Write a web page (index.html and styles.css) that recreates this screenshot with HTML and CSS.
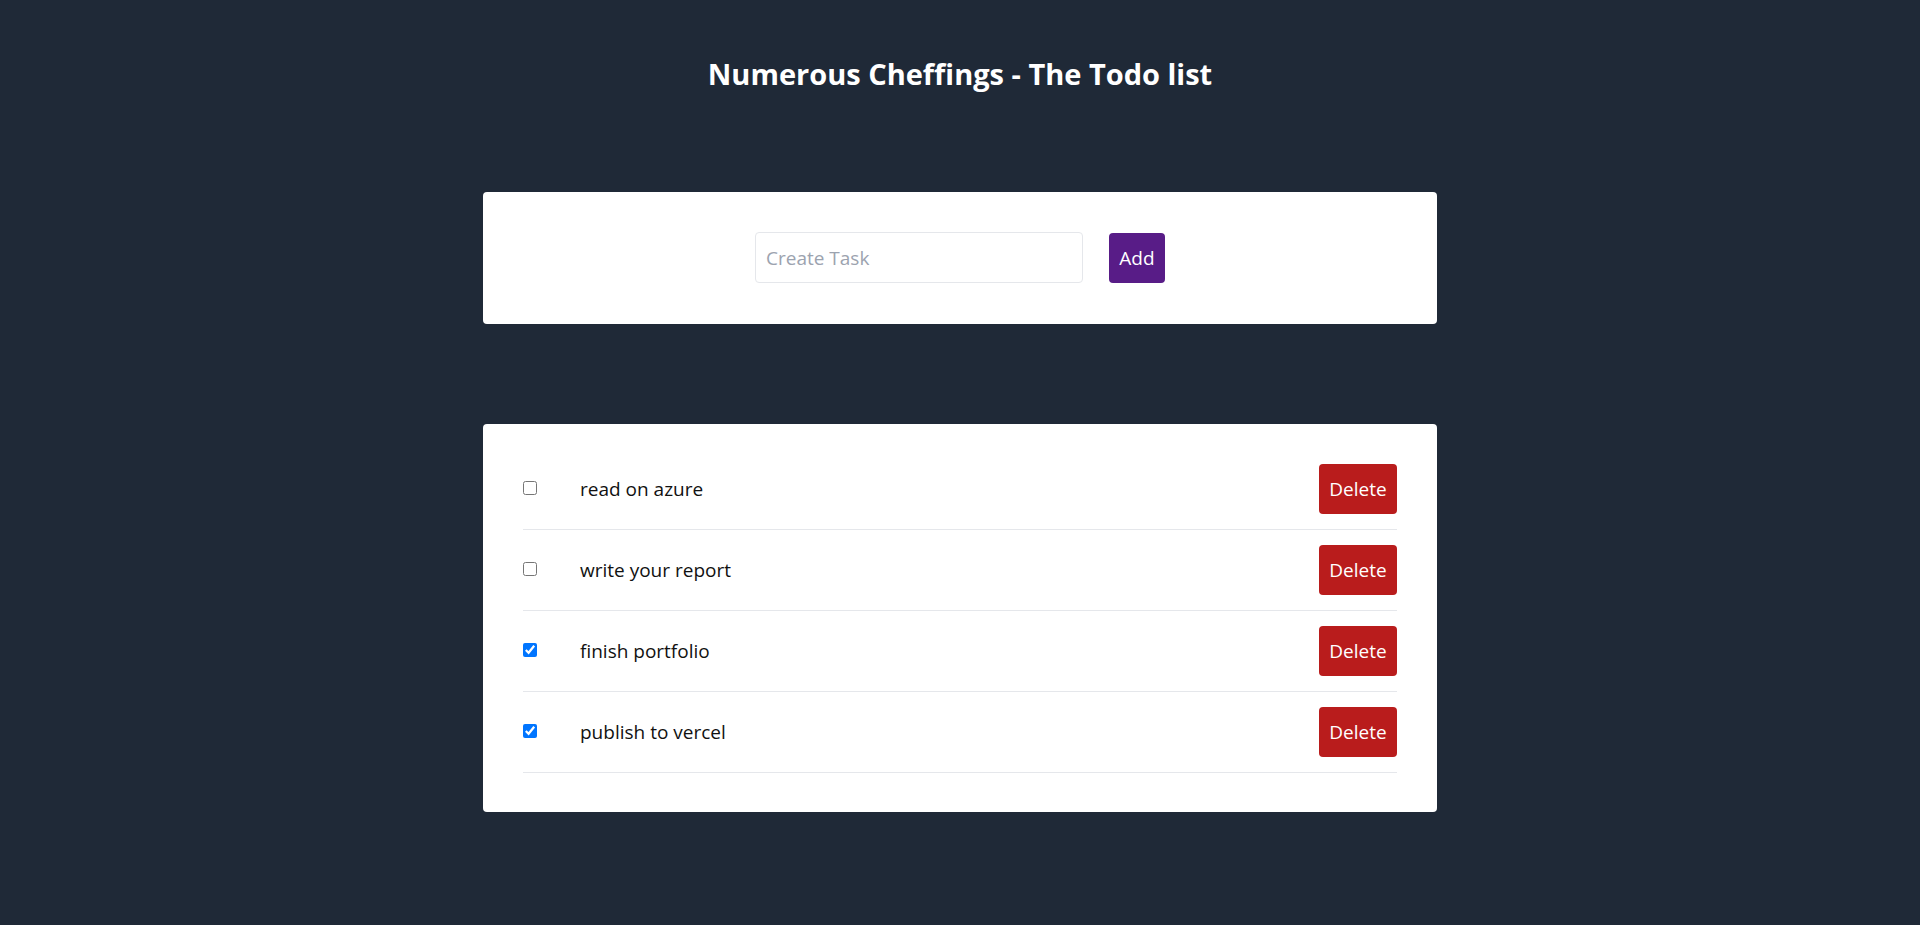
FILE: index.html
```html
<!DOCTYPE html>
<html lang="en">
<head>
<meta charset="utf-8">
<title>Numerous Cheffings - The Todo list</title>
<link rel="stylesheet" href="styles.css">
</head>
<body>
<main class="page">
  <h1 class="title">Numerous Cheffings - The Todo list</h1>
  <section class="card create-card">
    <input class="task-input" type="text" placeholder="Create Task">
    <button class="btn btn-add" type="button">Add</button>
  </section>
  <section class="card list-card">
    <div class="task-row">
      <input class="task-check" type="checkbox">
      <span class="task-text">read on azure</span>
      <button class="btn btn-delete" type="button">Delete</button>
    </div>
    <div class="task-row">
      <input class="task-check" type="checkbox">
      <span class="task-text">write your report</span>
      <button class="btn btn-delete" type="button">Delete</button>
    </div>
    <div class="task-row">
      <input class="task-check" type="checkbox" checked>
      <span class="task-text">finish portfolio</span>
      <button class="btn btn-delete" type="button">Delete</button>
    </div>
    <div class="task-row">
      <input class="task-check" type="checkbox" checked>
      <span class="task-text">publish to vercel</span>
      <button class="btn btn-delete" type="button">Delete</button>
    </div>
  </section>
</main>
</body>
</html>
```

FILE: styles.css
```css
html, body {
  margin: 0;
  padding: 0;
}

body {
  background: #1f2937;
  min-height: 100vh;
  font-family: "Open Sans", "Noto Sans", "Liberation Sans", sans-serif;
  color: #111827;
}

.page {
  display: flex;
  flex-direction: column;
  align-items: center;
  padding-top: 54px;
  padding-bottom: 60px;
}

.title {
  margin: 0 0 98px;
  font-size: 29px;
  line-height: 40px;
  font-weight: 700;
  color: #ffffff;
  text-align: center;
}

.card {
  box-sizing: border-box;
  width: 954px;
  background: #ffffff;
  border-radius: 4px;
}

.create-card {
  display: flex;
  justify-content: center;
  align-items: center;
  gap: 26px;
  padding: 40px 40px 41px;
}

.task-input {
  box-sizing: border-box;
  width: 328px;
  height: 51px;
  margin: 0;
  padding: 0 10px;
  border: 1px solid #e5e7eb;
  border-radius: 4px;
  font-family: inherit;
  font-size: 19px;
  color: #111827;
  outline: none;
}

.task-input::placeholder {
  color: #9ca3af;
}

.btn {
  box-sizing: border-box;
  margin: 0;
  border: none;
  border-radius: 4px;
  color: #ffffff;
  font-family: inherit;
  font-size: 19px;
  cursor: pointer;
}

.btn-add {
  width: 56px;
  height: 50px;
  padding: 0;
  background: #581c87;
}

.list-card {
  margin-top: 100px;
  padding: 40px 40px 39px;
}

.task-row {
  display: flex;
  align-items: center;
  padding-bottom: 15px;
  border-bottom: 1px solid #e5e7eb;
}

.task-row + .task-row {
  margin-top: 15px;
}

.task-check {
  width: 14px;
  height: 14px;
  margin: 0 43px 0 0;
  flex: none;
  position: relative;
  top: -1px;
}

.task-text {
  flex: 1;
  font-size: 19px;
  color: #111111;
}

.btn-delete {
  width: 78px;
  height: 50px;
  padding: 0;
  background: #b91c1c;
}
```
